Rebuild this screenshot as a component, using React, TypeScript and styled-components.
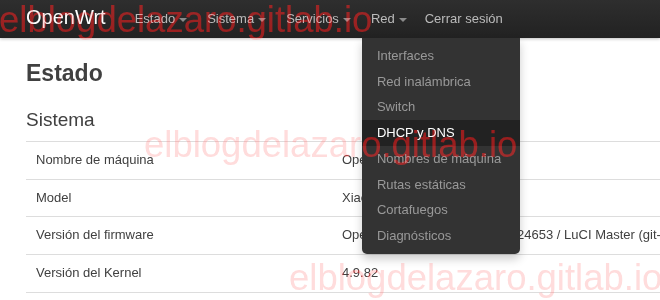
import React from "react";
import styled, { createGlobalStyle } from "styled-components";

const GlobalStyle = createGlobalStyle`
  html, body {
    margin: 0;
    padding: 0;
    overflow: hidden;
    background: #fff;
  }
  body {
    font-family: "Liberation Sans", Arial, Helvetica, sans-serif;
    font-size: 13px;
    color: #404040;
  }
`;

const Page = styled.div`
  position: relative;
  width: 660px;
  height: 300px;
  overflow: hidden;
`;

const Navbar = styled.header`
  position: relative;
  z-index: 10;
  display: flex;
  align-items: flex-start;
  height: 38px;
  padding: 0 26px;
  background: linear-gradient(to bottom, #2e2e2e, #222222);
  box-shadow: 0 1px 3px rgba(0, 0, 0, 0.25);
`;

const Brand = styled.a`
  display: block;
  padding: 8px 19px 12px 0;
  font-size: 20px;
  line-height: 18px;
  color: #ffffff;
  text-decoration: none;
`;

const NavList = styled.ul`
  display: flex;
  list-style: none;
  margin: 0;
  padding: 0;
`;

const NavItem = styled.li<{ $last?: boolean }>`
  position: relative;
  margin-left: ${(p) => (p.$last ? "-2px" : "0")};
`;

const NavLink = styled.a`
  display: block;
  padding: 10px;
  line-height: 18px;
  color: #bbbbbb;
  text-decoration: none;
  white-space: nowrap;
`;

const Caret = styled.span`
  display: inline-block;
  vertical-align: top;
  width: 0;
  height: 0;
  margin-top: 8px;
  margin-left: 4px;
  border-top: 4px solid #8a8a8a;
  border-left: 4px solid transparent;
  border-right: 4px solid transparent;
`;

const Dropdown = styled.ul`
  position: absolute;
  top: 100%;
  left: 1px;
  min-width: 158px;
  margin: 0;
  padding: 5px 0;
  list-style: none;
  background: #333333;
  border-radius: 0 0 5px 5px;
  box-shadow: 0 5px 10px rgba(0, 0, 0, 0.2);
`;

const DropdownLink = styled.a<{ $active?: boolean }>`
  display: block;
  padding: 4px 15px;
  line-height: 17.7px;
  white-space: nowrap;
  text-decoration: none;
  color: ${(p) => (p.$active ? "#ffffff" : "#999999")};
  background: ${(p) => (p.$active ? "#222222" : "transparent")};
`;

const Main = styled.main`
  padding: 0 26px;
`;

const Title = styled.h2`
  margin: 20px 0 0;
  font-size: 23px;
  line-height: 30px;
  font-weight: bold;
  color: #404040;
`;

const Section = styled.h3`
  margin: 20px 0 9px;
  font-size: 19px;
  line-height: 24px;
  font-weight: normal;
  color: #404040;
`;

const Table = styled.table`
  width: 1000px;
  border-collapse: collapse;
`;

const Row = styled.tr`
  border-top: 1px solid #dddddd;
  border-bottom: 1px solid #dddddd;
`;

const Cell = styled.td<{ $label?: boolean }>`
  padding: 10px;
  line-height: 16.7px;
  white-space: nowrap;
  vertical-align: top;
  width: ${(p) => (p.$label ? "286px" : "auto")};
  color: #404040;
`;

const Watermark = styled.span<{ $top: number; $left: number }>`
  position: absolute;
  z-index: 20;
  top: ${(p) => p.$top}px;
  left: ${(p) => p.$left}px;
  font-family: "Liberation Sans", Arial, sans-serif;
  font-size: 36.5px;
  line-height: 36px;
  white-space: nowrap;
  color: rgb(196, 110, 110);
  mix-blend-mode: hard-light;
  pointer-events: none;
`;

const menu = [
  { label: "Estado", dropdown: true },
  { label: "Sistema", dropdown: true },
  { label: "Servicios", dropdown: true },
  { label: "Red", dropdown: true, open: true },
  { label: "Cerrar sesión", dropdown: false },
];

const redItems = [
  "Interfaces",
  "Red inalámbrica",
  "Switch",
  "DHCP y DNS",
  "Nombres de máquina",
  "Rutas estáticas",
  "Cortafuegos",
  "Diagnósticos",
];

const rows: [string, string][] = [
  ["Nombre de máquina", "OpenWrt"],
  ["Model", "Xiaomi Mi Router 3G"],
  [
    "Versión del firmware",
    "OpenWrt SNAPSHOT r6224-d24653 / LuCI Master (git-18.057.59229-a6d0a34)",
  ],
  ["Versión del Kernel", "4.9.82"],
];

export default function App() {
  return (
    <Page>
      <GlobalStyle />
      <Navbar>
        <Brand href="#">OpenWrt</Brand>
        <NavList>
          {menu.map((m) => (
            <NavItem key={m.label} $last={!m.dropdown}>
              <NavLink href="#">
                {m.label}
                {m.dropdown && <Caret />}
              </NavLink>
              {m.open && (
                <Dropdown>
                  {redItems.map((it) => (
                    <li key={it}>
                      <DropdownLink href="#" $active={it === "DHCP y DNS"}>
                        {it}
                      </DropdownLink>
                    </li>
                  ))}
                </Dropdown>
              )}
            </NavItem>
          ))}
        </NavList>
      </Navbar>
      <Main>
        <Title>Estado</Title>
        <Section>Sistema</Section>
        <Table>
          <tbody>
            {rows.map(([k, v]) => (
              <Row key={k}>
                <Cell $label>{k}</Cell>
                <Cell>{v}</Cell>
              </Row>
            ))}
          </tbody>
        </Table>
      </Main>
      <Watermark $top={2} $left={-1}>elblogdelazaro.gitlab.io</Watermark>
      <Watermark $top={127} $left={144}>elblogdelazaro.gitlab.io</Watermark>
      <Watermark $top={260} $left={289}>elblogdelazaro.gitlab.io</Watermark>
    </Page>
  );
}
